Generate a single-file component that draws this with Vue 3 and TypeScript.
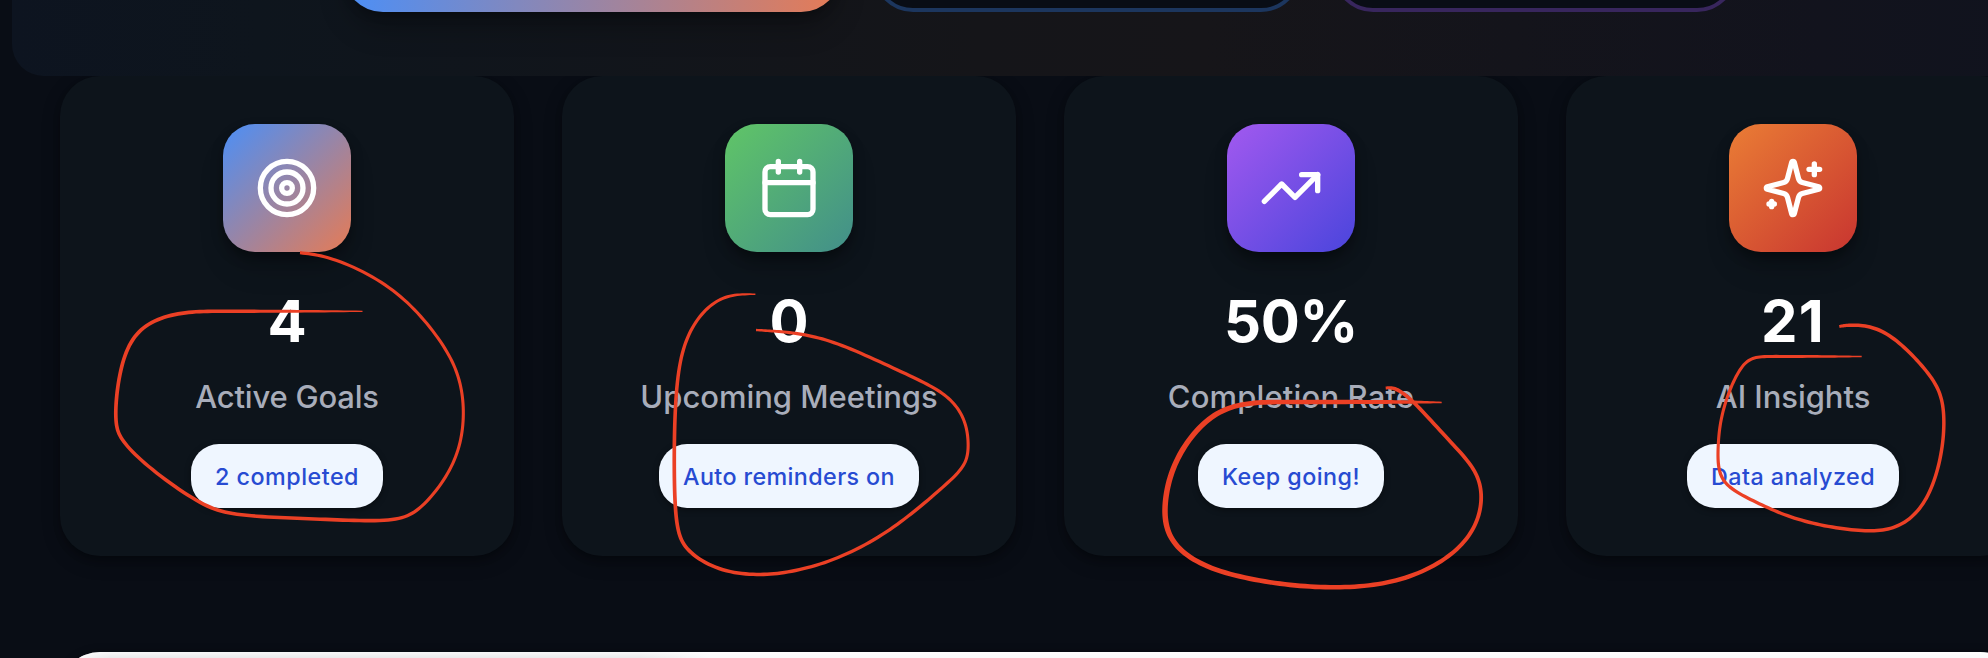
<script setup lang="ts">
type Point = [x: number, y: number, width: number]

interface Stat {
  icon: 'target' | 'calendar' | 'trend' | 'sparkles'
  value: string
  valueTracking: number
  label: string
  labelTracking: number
  note: string
  noteTracking: number
}

const stats: Stat[] = [
  { icon: 'target', value: '4', valueTracking: 0, label: 'Active Goals', labelTracking: -0.2, note: '2 completed', noteTracking: 0.5 },
  { icon: 'calendar', value: '0', valueTracking: 0, label: 'Upcoming Meetings', labelTracking: -0.03, note: 'Auto reminders on', noteTracking: 0.39 },
  { icon: 'trend', value: '50%', valueTracking: -0.3, label: 'Completion Rate', labelTracking: 0.15, note: 'Keep going!', noteTracking: 0.45 },
  { icon: 'sparkles', value: '21', valueTracking: 1.2, label: 'AI Insights', labelTracking: -0.05, note: 'Data analyzed', noteTracking: 0.45 },
]

// Pen annotations: each point carries the thickness of the pen at that place.
const marks: Point[][] = [
  [
    [300, 252.7, 3], [328.6, 256.7, 2.8], [378.6, 279.3, 2.8], [414.3, 308.3, 2.8], [444.6, 346.7, 2.8],
    [459, 376.7, 2.8], [464, 410, 2.8], [460, 446.7, 2.8], [444.6, 480, 2.8], [418, 510.7, 2.9],
    [396.4, 520.3, 3.2], [342.9, 520, 3.4], [285.7, 517.7, 3.3], [228.6, 514, 3.3], [200, 503.3, 3.3],
    [150, 468.3, 3.2], [121.4, 440, 3.2], [115.4, 423.3, 3.4], [117.9, 383.3, 3.4], [128.6, 343.3, 3.4],
    [150, 321.7, 3.4], [185.7, 312, 3.4], [221, 311.3, 3.3], [300, 311.3, 2.6], [362.5, 311.3, 1],
  ],
  [
    [756, 330, 2], [775, 331.2, 2.6], [804.3, 334.3, 3], [840, 344, 3], [890, 366.7, 3], [929.3, 385, 3],
    [950.7, 399.3, 2.8], [965, 420, 2.8], [968.6, 446.7, 2.8], [965, 465, 2.8], [947.1, 483.3, 3],
    [915, 511, 3], [879.3, 537.3, 3], [832.9, 560.5, 3], [790, 572, 3.1], [757.9, 575, 3.3],
    [718.6, 570, 3.2], [686.4, 550, 3.4], [677.5, 530, 3.4], [674.6, 493.3, 3.4], [674.3, 440, 3.4],
    [677.5, 373.3, 3.2], [688.2, 333.3, 3], [707.9, 306.7, 2.8], [729.3, 295, 2.8], [755.4, 294.3, 1.2],
  ],
  [
    [1385.7, 388, 2.6], [1395, 387.8, 3.6], [1413.3, 401.3, 3.4], [1443.3, 434.5, 3.4], [1468.3, 461, 3.4],
    [1480, 481.7, 3.4], [1481.3, 506.7, 3.6], [1471.7, 533.3, 3.6], [1446.7, 558.8, 3.8], [1405, 579, 4],
    [1360, 586.9, 4.2], [1310, 587, 4.4], [1260, 581, 4.4], [1210, 568.6, 4.5], [1178, 549, 4.8],
    [1165, 525, 5.2], [1166, 493.3, 5.2], [1175, 462.3, 5.2], [1196, 430, 5], [1222.3, 409.5, 4.8],
    [1253.3, 402.5, 4.5], [1293.3, 402, 4.2], [1370, 402, 4], [1413, 402, 3], [1441.7, 402.5, 1.2],
  ],
  [
    [1839.3, 326.5, 2.6], [1846.7, 325.2, 3.2], [1870, 326, 3.4], [1893.3, 337.3, 3.4], [1920, 363.3, 3.2],
    [1939.3, 389, 3.2], [1944.3, 416.7, 3.2], [1941.7, 453.3, 3.2], [1930, 493.3, 3.2], [1911.7, 518.3, 3.2],
    [1888.3, 530, 3.2], [1860, 530.7, 3.2], [1820, 525.3, 3.2], [1783.3, 514.7, 3], [1753.3, 500.7, 3],
    [1726.7, 486, 3], [1718.7, 470, 3], [1718, 450, 2.8], [1720, 423.3, 2.8], [1728.3, 393.3, 2.8],
    [1741.7, 366, 2.8], [1753.3, 357.3, 2.8], [1775, 356.5, 2.8], [1830, 356.5, 2.4], [1861.7, 356.5, 1],
  ],
]

// Centripetal parametrisation keeps unevenly spaced points free of overshoot.
function centripetal(p: Point[], t: number): [number, number] {
  const step = (a: Point, b: Point) => Math.max(Math.hypot(b[0] - a[0], b[1] - a[1]) ** 0.5, 0.001)
  const k0 = 0
  const k1 = k0 + step(p[0], p[1])
  const k2 = k1 + step(p[1], p[2])
  const k3 = k2 + step(p[2], p[3])
  const k = k1 + (k2 - k1) * t
  const at = (i: 0 | 1) => {
    const mix = (a: number, b: number, ka: number, kb: number) => ((kb - k) * a + (k - ka) * b) / (kb - ka)
    const a1 = mix(p[0][i], p[1][i], k0, k1)
    const a2 = mix(p[1][i], p[2][i], k1, k2)
    const a3 = mix(p[2][i], p[3][i], k2, k3)
    return mix(mix(a1, a2, k0, k2), mix(a2, a3, k1, k3), k1, k2)
  }
  return [at(0), at(1)]
}

// Moving average that narrows towards both ends, so the ends stay in place.
function smooth(points: Point[], reach: number): Point[] {
  return points.map((_, i) => {
    const r = Math.min(reach, i, points.length - 1 - i)
    const sum: Point = [0, 0, 0]
    for (let j = i - r; j <= i + r; j++) {
      sum[0] += points[j][0]
      sum[1] += points[j][1]
      sum[2] += points[j][2]
    }
    const n = 2 * r + 1
    return [sum[0] / n, sum[1] / n, sum[2] / n]
  })
}

function outline(points: Point[]): string {
  let samples: Point[] = []
  for (let i = 0; i < points.length - 1; i++) {
    const b = points[i]
    const c = points[i + 1]
    const a: Point = points[i - 1] ?? [2 * b[0] - c[0], 2 * b[1] - c[1], b[2]]
    const d: Point = points[i + 2] ?? [2 * c[0] - b[0], 2 * c[1] - b[1], c[2]]
    for (let s = 0; s < 10; s++) {
      const t = s / 10
      const [x, y] = centripetal([a, b, c, d], t)
      samples.push([x, y, b[2] + (c[2] - b[2]) * t])
    }
  }
  samples.push(points[points.length - 1])
  samples = smooth(smooth(samples, 5), 4)
  const left: string[] = []
  const right: string[] = []
  samples.forEach(([x, y, w], i) => {
    const p = samples[Math.max(i - 1, 0)]
    const n = samples[Math.min(i + 1, samples.length - 1)]
    const dx = n[0] - p[0]
    const dy = n[1] - p[1]
    const len = Math.hypot(dx, dy) || 1
    const half = (w + 0.3) / 2
    const ox = (-dy / len) * half
    const oy = (dx / len) * half
    left.push(`${(x + ox).toFixed(2)} ${(y + oy).toFixed(2)}`)
    right.unshift(`${(x - ox).toFixed(2)} ${(y - oy).toFixed(2)}`)
  })
  return `M${left.concat(right).join('L')}Z`
}

const markPaths = marks.map(outline)
</script>

<template>
  <main class="page">
    <section class="hero">
      <div class="action primary"></div>
      <div class="action blue"></div>
      <div class="action purple"></div>
    </section>

    <section class="stats">
      <article v-for="stat in stats" :key="stat.label" class="card">
        <div class="tile" :class="stat.icon">
          <svg viewBox="0 0 24 24" class="icon">
            <template v-if="stat.icon === 'target'">
              <circle cx="12" cy="12" r="10" />
              <circle cx="12" cy="12" r="6" />
              <circle cx="12" cy="12" r="2" />
            </template>
            <template v-else-if="stat.icon === 'calendar'">
              <path d="M8 2v4M16 2v4M3 10h18" />
              <rect x="3" y="4" width="18" height="18" rx="2" />
            </template>
            <template v-else-if="stat.icon === 'trend'">
              <path d="M22 7l-8.5 8.5-5-5L2 17" />
              <path d="M16 7h6v6" />
            </template>
            <template v-else>
              <path
                d="M9.937 15.5A2 2 0 0 0 8.5 14.063l-6.135-1.582a.5.5 0 0 1 0-.962L8.5 9.936A2 2 0 0 0 9.937 8.5l1.582-6.135a.5.5 0 0 1 .963 0L14.063 8.5A2 2 0 0 0 15.5 9.937l6.135 1.581a.5.5 0 0 1 0 .964L15.5 14.063a2 2 0 0 0-1.437 1.437l-1.582 6.135a.5.5 0 0 1-.963 0z"
              />
              <path d="M20 3v4M22 5h-4M4 17v2M5 18H3" />
            </template>
          </svg>
        </div>
        <div class="value" :style="{ letterSpacing: stat.valueTracking + 'px' }">{{ stat.value }}</div>
        <div class="label" :style="{ letterSpacing: stat.labelTracking + 'px' }">{{ stat.label }}</div>
        <div class="note" :style="{ letterSpacing: stat.noteTracking + 'px' }">{{ stat.note }}</div>
      </article>
    </section>

    <section class="sheet"></section>

    <svg class="marks" viewBox="0 0 1988 658">
      <path v-for="d in markPaths" :key="d" :d="d" />
    </svg>
  </main>
</template>

<style>
body {
  margin: 0;
  background: #090d15;
}
</style>

<style scoped>
.page {
  position: relative;
  width: 1988px;
  height: 658px;
  overflow: hidden;
  background: #090d15;
  font-family: Inter, 'Liberation Sans', sans-serif;
}

.hero {
  box-sizing: border-box;
  display: flex;
  justify-content: center;
  gap: 32px;
  width: 2056px;
  height: 76px;
  margin-left: 12px;
  border-radius: 0 0 32px 32px;
  background: linear-gradient(90deg, #0d1420 0%, #0e151d 12%, #151519 47%, #161519 58%, #12131d 88%, #10131e 100%);
}

.action {
  box-sizing: border-box;
  height: 92px;
  margin-top: -80px;
  border-radius: 40px;
}

.primary {
  width: 498px;
  background: linear-gradient(90deg, #4b8ff7, #e67b55);
  box-shadow: 0 20px 30px -6px rgba(0, 0, 0, 0.3), 0 8px 12px -8px rgba(0, 0, 0, 0.4);
}

.blue {
  width: 428px;
  border: 4px solid #1c365e;
  background: #090d15;
}

.purple {
  width: 404px;
  border: 4px solid #38265d;
  background: #090d15;
}

.stats {
  display: grid;
  grid-template-columns: repeat(4, 454px);
  gap: 48px;
  width: 1960px;
  margin-left: 60px;
  clip-path: inset(0 -60px -60px -60px);
}

.card {
  box-sizing: border-box;
  display: flex;
  flex-direction: column;
  align-items: center;
  height: 480px;
  padding: 48px;
  border-radius: 40px;
  background: #0d141b;
  box-shadow: 0 6px 18px rgba(0, 0, 0, 0.25), 0 4px 8px -2px rgba(0, 0, 0, 0.3);
}

.tile {
  display: grid;
  place-items: center;
  flex: none;
  width: 128px;
  height: 128px;
  margin-bottom: 32px;
  border-radius: 32px;
  box-shadow: 0 20px 30px -6px rgba(0, 0, 0, 0.2), 0 6px 14px -2px rgba(0, 0, 0, 0.45);
}

.target {
  background: linear-gradient(135deg, #4b8ff7, #e67b55);
}

.calendar {
  background: linear-gradient(135deg, #60c567, #428f8a);
}

.trend {
  background: linear-gradient(135deg, #a259ef, #4a45dc);
}

.sparkles {
  background: linear-gradient(135deg, #ea7d35, #c83530);
}

.icon {
  width: 64px;
  height: 64px;
  fill: none;
  stroke: #fff;
  stroke-width: 2;
  stroke-linecap: round;
  stroke-linejoin: round;
}

.value {
  margin-bottom: 14px;
  color: #fff;
  font-size: 58px;
  font-weight: 700;
  line-height: 74px;
}

.label {
  margin-bottom: 22px;
  color: #a8adba;
  font-size: 31px;
  font-weight: 500;
  line-height: 50px;
  white-space: nowrap;
}

.note {
  padding: 17px 24px 15px;
  border-radius: 28px;
  background: #eff6ff;
  box-shadow: 0 2px 6px rgba(0, 0, 0, 0.4);
  color: #274bd2;
  font-size: 23.3px;
  font-weight: 500;
  line-height: 32px;
  white-space: nowrap;
}

.sheet {
  width: 1960px;
  height: 80px;
  margin: 96px 0 0 60px;
  border-radius: 40px;
  background: linear-gradient(90deg, #fff 0, #e9e9ea 50px, #e9e9ea 580px, #fafafb 650px);
  box-shadow: 0 0 8px rgba(0, 0, 0, 0.3), inset 0 3px 5px rgba(255, 255, 255, 0.7);
}

.marks {
  position: absolute;
  inset: 0;
  width: 1988px;
  height: 658px;
  fill: #eb4025;
  pointer-events: none;
}
</style>
